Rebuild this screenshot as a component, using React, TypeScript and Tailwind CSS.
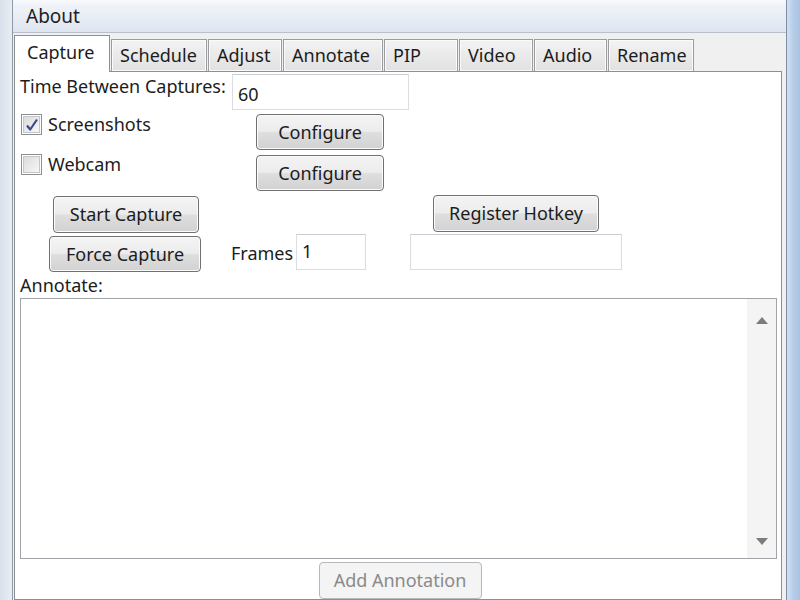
import React from 'react';

const font = { fontFamily: '"Noto Sans", "Open Sans", sans-serif' };

const tabs = ['Capture', 'Schedule', 'Adjust', 'Annotate', 'PIP', 'Video', 'Audio', 'Rename'];
const tabWidths = ['w-[96px]', 'w-[96px]', 'w-[74px]', 'w-[100px]', 'w-[74px]', 'w-[74px]', 'w-[73px]', 'w-[86px]'];

function Button({ label, className = '', disabled = false }: { label: string; className?: string; disabled?: boolean }) {
  if (disabled) {
    return (
      <div className={`flex items-center justify-center rounded-[4px] border border-[#b5b9bd] bg-[#f4f4f4] text-[#8a8a8a] ${className}`}>
        {label}
      </div>
    );
  }
  return (
    <div
      className={`flex items-center justify-center rounded-[4px] border border-[#707070] bg-[linear-gradient(to_bottom,#f4f4f4_0%,#ececec_48%,#dedede_52%,#d2d2d2_100%)] text-[#1c1c1c] shadow-[inset_0_0_0_1px_#fbfbfb] ${className}`}
    >
      {label}
    </div>
  );
}

function TextBox({ value = '', className = '' }: { value?: string; className?: string }) {
  return (
    <div className={`flex items-center border border-[#dadde2] border-t-[#c9ccd2] bg-white pl-[5px] text-[#1c1c1c] ${className}`}>
      {value}
    </div>
  );
}

function Checkbox({ checked }: { checked: boolean }) {
  return (
    <div className="flex h-[21px] w-[21px] shrink-0 items-center justify-center border border-[#8e8f8f] bg-white">
      <div className="flex h-[17px] w-[17px] items-center justify-center border border-[#c4c6c9] bg-linear-to-br from-[#dcdcdc] to-[#f6f6f6]">
        {checked && (
          <svg width="14" height="14" viewBox="0 0 14 14">
            <path d="M2 7.5 L5.2 11.5 L12 1.5" fill="none" stroke="#3b4a90" strokeWidth="2.2" strokeLinejoin="round" />
          </svg>
        )}
      </div>
    </div>
  );
}

export default function App() {
  return (
    <div className="flex h-[600px] w-[800px] overflow-hidden text-[18px]" style={font}>
      {/* left window frame */}
      <div className="w-[13px] bg-linear-to-r from-[#d8e0ea] to-[#e9eef4] border-r border-[#8f9aa8]" />

      <div className="flex flex-1 flex-col bg-[#f0f0f0]">
        {/* menu bar */}
        <div className="flex h-[33px] items-center border-b border-[#b9c0cc] bg-[linear-gradient(to_bottom,#f8f9fc_0%,#eef2f8_20%,#dfe6f1_100%)] pl-[13px] text-[19px] text-[#1e1e1e]">
          About
        </div>

        <div className="flex flex-1 flex-col pl-px pr-[4px] pt-[1px]">
          {/* tab strip */}
          <div className="relative z-10 flex h-[37px] items-end">
            {tabs.map((t, i) =>
              i === 0 ? (
                <div
                  key={t}
                  className={`${tabWidths[i]} -mb-px flex h-[37px] items-center border border-b-0 border-[#8e8f8f] bg-white pb-[3px] pl-[12px] text-[#1c1c1c]`}
                >
                  {t}
                </div>
              ) : (
                <div
                  key={t}
                  className={`${tabWidths[i]} ml-px flex h-[32px] items-center border border-b-0 border-[#9a9c9f] bg-linear-to-b from-[#f3f3f3] to-[#e1e1e1] pl-[8px] text-[#1c1c1c] shadow-[inset_0_0_0_1px_#fafafa]`}
                >
                  {t}
                </div>
              ),
            )}
          </div>

          {/* tab panel */}
          <div className="flex flex-1 flex-col border border-[#8e8f8f] bg-white text-[#1c1c1c]">
            {/* Time between captures */}
            <div className="mt-[2px] flex h-[37px] items-start">
              <div className="w-[217px] whitespace-nowrap pl-[5px] leading-[24px]">Time Between Captures:</div>
              <TextBox value="60" className="h-[36px] w-[177px] pt-[4px]" />
            </div>

            {/* Screenshots */}
            <div className="mt-[2px] flex h-[38px] items-start">
              <div className="-mt-[2px] flex w-[241px] items-center gap-[6px] pl-[6px]">
                <Checkbox checked />
                <span>Screenshots</span>
              </div>
              <Button label="Configure" className="mt-[1px] h-[36px] w-[128px]" />
            </div>

            {/* Webcam */}
            <div className="mt-[2px] flex h-[40px] items-start">
              <div className="-mt-[2px] flex w-[241px] items-center gap-[6px] pl-[6px]">
                <Checkbox checked={false} />
                <span>Webcam</span>
              </div>
              <Button label="Configure" className="mt-[2px] h-[36px] w-[128px]" />
            </div>

            {/* Start capture / Register hotkey */}
            <div className="mt-[2px] flex h-[38px] items-start">
              <Button label="Start Capture" className="ml-[38px] mt-[1px] h-[37px] w-[146px]" />
              <Button label="Register Hotkey" className="ml-[234px] h-[37px] w-[166px]" />
            </div>

            {/* Force capture / frames */}
            <div className="flex h-[39px] items-start">
              <Button label="Force Capture" className="ml-[34px] mt-[3px] h-[36px] w-[152px]" />
              <div className="ml-[30px] mt-[7px] w-[65px]">Frames</div>
              <TextBox value="1" className="mt-px h-[36px] w-[70px] items-start pl-[4px] pt-[3px]" />
              <TextBox className="ml-[44px] mt-px h-[36px] w-[212px]" />
            </div>

            <div className="mt-[3px] pl-[5px] leading-[20px]">Annotate:</div>

            {/* annotation text area */}
            <div className="ml-[5px] mt-[3px] flex h-[261px] w-[757px] border border-[#a0a3a8] bg-white">
              <div className="flex-1" />
              <div className="flex w-[29px] flex-col items-center justify-between bg-[#f4f4f4] pb-[13px] pt-[18px]">
                <svg width="12" height="7" viewBox="0 0 12 7">
                  <path d="M6 0 L12 7 L0 7 Z" fill="#7c7c7c" />
                </svg>
                <svg width="12" height="7" viewBox="0 0 12 7">
                  <path d="M0 0 L12 0 L6 7 Z" fill="#7c7c7c" />
                </svg>
              </div>
            </div>

            <div className="mt-[3px] flex justify-center pl-[4px]">
              <Button label="Add Annotation" disabled className="h-[37px] w-[163px]" />
            </div>
          </div>
        </div>
      </div>

      {/* right window frame */}
      <div className="w-[14px] border-l border-[#7d8ea3] bg-linear-to-r from-[#cfe0f3] via-[#b6cde8] to-[#a9c3e2]" />
    </div>
  );
}
